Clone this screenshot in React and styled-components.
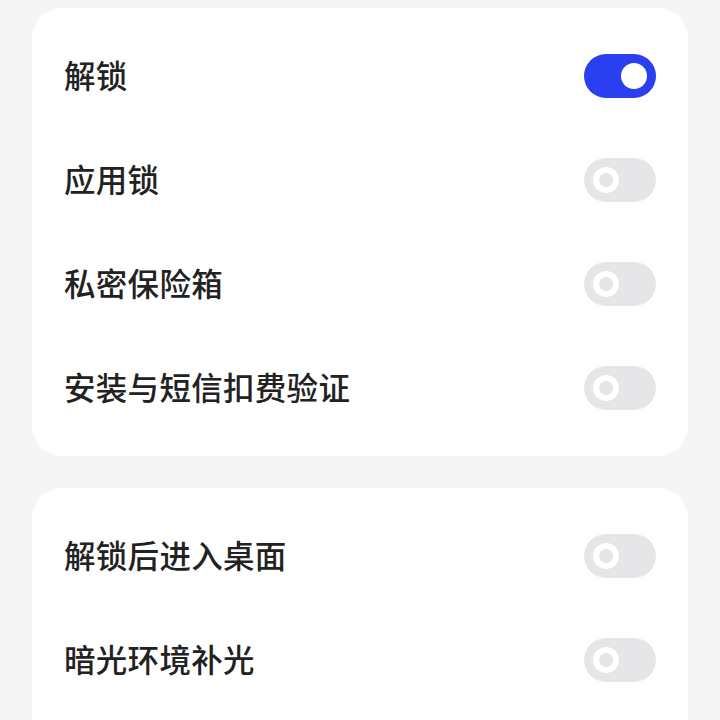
import React, { useState } from "react"
import styled, { createGlobalStyle } from "styled-components"

const GlobalStyle = createGlobalStyle`
  html, body {
    margin: 0;
    padding: 0;
    background: #f5f5f5;
  }
  body {
    font-family: "Noto Sans CJK SC", "Noto Sans", sans-serif;
  }
`

const groups = [
  [
    { label: "解锁", on: true },
    { label: "应用锁", on: false },
    { label: "私密保险箱", on: false },
    { label: "安装与短信扣费验证", on: false },
  ],
  [
    { label: "解锁后进入桌面", on: false },
    { label: "暗光环境补光", on: false },
  ],
]

function Toggle({ initial }) {
  const [on, setOn] = useState(initial)
  return (
    <Track on={on ? 1 : 0} onClick={() => setOn(!on)}>
      <Knob on={on ? 1 : 0} />
    </Track>
  )
}

export default function App() {
  return (
    <>
      <GlobalStyle />
      <Page>
        {groups.map((rows, i) => (
          <Card key={i}>
            {rows.map((row) => (
              <Row key={row.label}>
                <Label>{row.label}</Label>
                <Toggle initial={row.on} />
              </Row>
            ))}
          </Card>
        ))}
      </Page>
    </>
  )
}

const Page = styled.div`
  height: 720px;
  overflow: hidden;
  padding: 8px 32px 0;
  display: flex;
  flex-direction: column;
  gap: 32px;
  box-sizing: border-box;
`

const Card = styled.div`
  background: #fff;
  border-radius: 30px;
  padding: 16px 32px 60px;
  display: flex;
  flex-direction: column;
  flex-shrink: 0;

  &:first-child {
    padding-bottom: 16px;
  }
`

const Row = styled.div`
  height: 104px;
  display: flex;
  align-items: center;
  justify-content: space-between;
`

const Label = styled.span`
  font-size: 31.5px;
  font-weight: 500;
  color: #222;
  letter-spacing: 0.3px;
  padding-bottom: 4px;
`

const Track = styled.div`
  width: 72px;
  height: 44px;
  border-radius: 22px;
  background: ${(p) => (p.on ? "#2a3ff0" : "#e6e6e9")};
  display: flex;
  align-items: center;
  justify-content: ${(p) => (p.on ? "flex-end" : "flex-start")};
  padding: 0 9px;
  box-sizing: border-box;
  cursor: pointer;
`

const Knob = styled.div`
  width: 26px;
  height: 26px;
  border-radius: 50%;
  box-sizing: border-box;
  background: ${(p) => (p.on ? "#fff" : "transparent")};
  border: ${(p) => (p.on ? "none" : "6px solid #fff")};
`
